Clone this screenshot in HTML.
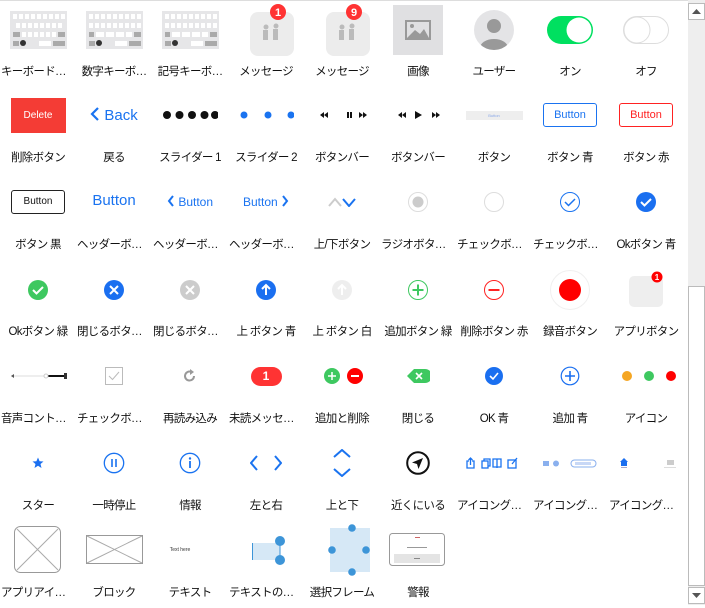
<!DOCTYPE html>
<html><head><meta charset="utf-8">
<style>
*{margin:0;padding:0;box-sizing:border-box}
body{width:705px;height:605px;overflow:hidden;background:#fff;font-family:"Liberation Sans","Noto Sans CJK JP",sans-serif;position:relative}
.top{position:absolute;left:0;top:0;width:688px;height:1px;background:#ddd}
.l{position:absolute;width:76px;text-align:center;font-size:11.5px;letter-spacing:-0.7px;color:#111;white-space:nowrap;overflow:hidden;text-overflow:ellipsis;line-height:14px;padding:0 1px}
.i{position:absolute;display:flex;align-items:center;justify-content:center;width:76px;height:60px}
.sb{position:absolute;left:688px;top:0;width:17px;height:605px;background:#eee}
.thumb{position:absolute;left:688px;top:286px;width:17px;height:300px;background:#fff;border:1px solid #bbb}
.btn{position:absolute;left:688px;width:17px;height:17px;background:#fff;border:1px solid #bbb}
</style></head><body>
<div class="top"></div>

<!-- Row 1 -->
<div class="i" style="left:0;top:0">
<svg width="57" height="38" viewBox="0 0 57 38"><rect width="57" height="38" fill="#e6e6e8"/><g fill="#fff"><rect x="3" y="3" width="4" height="5"/><rect x="9" y="3" width="4" height="5"/><rect x="15" y="3" width="4" height="5"/><rect x="21" y="3" width="4" height="5"/><rect x="27" y="3" width="4" height="5"/><rect x="33" y="3" width="4" height="5"/><rect x="39" y="3" width="4" height="5"/><rect x="45" y="3" width="4" height="5"/><rect x="51" y="3" width="4" height="5"/><rect x="6" y="12" width="4" height="5"/><rect x="12" y="12" width="4" height="5"/><rect x="18" y="12" width="4" height="5"/><rect x="24" y="12" width="4" height="5"/><rect x="30" y="12" width="4" height="5"/><rect x="36" y="12" width="4" height="5"/><rect x="42" y="12" width="4" height="5"/><rect x="48" y="12" width="4" height="5"/><rect x="12" y="21" width="4" height="5"/><rect x="18" y="21" width="4" height="5"/><rect x="24" y="21" width="4" height="5"/><rect x="30" y="21" width="4" height="5"/><rect x="36" y="21" width="4" height="5"/><rect x="42" y="21" width="4" height="5"/><rect x="29" y="30" width="12" height="5"/></g><g fill="#aaa"><rect x="3" y="21" width="7" height="5"/><rect x="48" y="21" width="7" height="5"/><rect x="3" y="30" width="6" height="5"/><rect x="43" y="30" width="12" height="5"/></g><circle cx="13" cy="32" r="3" fill="#333"/></svg></div>
<div class="l" style="left:0;top:65px">キーボードコ…</div>
<div class="i" style="left:76px;top:0">
<svg width="57" height="38" viewBox="0 0 57 38"><rect width="57" height="38" fill="#e6e6e8"/><g fill="#fff"><rect x="3" y="3" width="4" height="5"/><rect x="9" y="3" width="4" height="5"/><rect x="15" y="3" width="4" height="5"/><rect x="21" y="3" width="4" height="5"/><rect x="27" y="3" width="4" height="5"/><rect x="33" y="3" width="4" height="5"/><rect x="39" y="3" width="4" height="5"/><rect x="45" y="3" width="4" height="5"/><rect x="51" y="3" width="4" height="5"/><rect x="3" y="12" width="4" height="5"/><rect x="9" y="12" width="4" height="5"/><rect x="15" y="12" width="4" height="5"/><rect x="21" y="12" width="4" height="5"/><rect x="27" y="12" width="4" height="5"/><rect x="33" y="12" width="4" height="5"/><rect x="39" y="12" width="4" height="5"/><rect x="45" y="12" width="4" height="5"/><rect x="51" y="12" width="4" height="5"/><rect x="10" y="21" width="8" height="5"/><rect x="20" y="21" width="8" height="5"/><rect x="30" y="21" width="8" height="5"/><rect x="40" y="21" width="6" height="5"/><rect x="29" y="30" width="12" height="5"/></g><g fill="#aaa"><rect x="3" y="21" width="5" height="5"/><rect x="48" y="21" width="7" height="5"/><rect x="3" y="30" width="6" height="5"/><rect x="43" y="30" width="12" height="5"/></g><circle cx="13" cy="32" r="3" fill="#333"/></svg></div>
<div class="l" style="left:76px;top:65px">数字キーボ…</div>
<div class="i" style="left:152px;top:0">
<svg width="57" height="38" viewBox="0 0 57 38"><rect width="57" height="38" fill="#e6e6e8"/><g fill="#fff"><rect x="3" y="3" width="4" height="5"/><rect x="9" y="3" width="4" height="5"/><rect x="15" y="3" width="4" height="5"/><rect x="21" y="3" width="4" height="5"/><rect x="27" y="3" width="4" height="5"/><rect x="33" y="3" width="4" height="5"/><rect x="39" y="3" width="4" height="5"/><rect x="45" y="3" width="4" height="5"/><rect x="51" y="3" width="4" height="5"/><rect x="3" y="12" width="4" height="5"/><rect x="9" y="12" width="4" height="5"/><rect x="15" y="12" width="4" height="5"/><rect x="21" y="12" width="4" height="5"/><rect x="27" y="12" width="4" height="5"/><rect x="33" y="12" width="4" height="5"/><rect x="39" y="12" width="4" height="5"/><rect x="45" y="12" width="4" height="5"/><rect x="51" y="12" width="4" height="5"/><rect x="10" y="21" width="8" height="5"/><rect x="20" y="21" width="8" height="5"/><rect x="30" y="21" width="8" height="5"/><rect x="40" y="21" width="6" height="5"/><rect x="29" y="30" width="12" height="5"/></g><g fill="#aaa"><rect x="3" y="21" width="5" height="5"/><rect x="48" y="21" width="7" height="5"/><rect x="3" y="30" width="6" height="5"/><rect x="43" y="30" width="12" height="5"/></g><circle cx="13" cy="32" r="3" fill="#333"/></svg></div>
<div class="l" style="left:152px;top:65px">記号キーボ…</div>
<div class="i" style="left:228px;top:0">
<svg width="60" height="56" viewBox="0 0 60 56"><rect x="14" y="10" width="44" height="44" rx="8" fill="#ececec"/><g fill="#bbb"><circle cx="30" cy="25" r="2.5"/><rect x="27" y="28" width="5" height="10"/><circle cx="40" cy="24" r="2.5"/><rect x="37" y="27" width="5" height="11"/></g><circle cx="42" cy="10" r="8" fill="#f33"/><text x="42" y="14" fill="#fff" font-size="11" font-weight="bold" text-anchor="middle" font-family="Liberation Sans">1</text></svg></div>
<div class="l" style="left:228px;top:65px">メッセージ</div>
<div class="i" style="left:304px;top:0">
<svg width="60" height="56" viewBox="0 0 60 56"><rect x="14" y="10" width="44" height="44" rx="8" fill="#ececec"/><g fill="#bbb"><circle cx="30" cy="25" r="2.5"/><rect x="27" y="28" width="5" height="10"/><circle cx="40" cy="24" r="2.5"/><rect x="37" y="27" width="5" height="11"/></g><circle cx="42" cy="10" r="8" fill="#f33"/><text x="42" y="14" fill="#fff" font-size="11" font-weight="bold" text-anchor="middle" font-family="Liberation Sans">9</text></svg></div>
<div class="l" style="left:304px;top:65px">メッセージ</div>
<div class="i" style="left:380px;top:0">
<svg width="50" height="50" viewBox="0 0 50 50"><rect width="50" height="50" fill="#e0e0e2"/><rect x="13" y="16" width="24" height="18" fill="none" stroke="#999" stroke-width="2"/><circle cx="19" cy="21" r="2" fill="#999"/><path d="M14 33 L22 25 L27 29 L31 24 L36 33Z" fill="#999"/></svg></div>
<div class="l" style="left:380px;top:65px">画像</div>
<div class="i" style="left:456px;top:0">
<svg width="40" height="40" viewBox="0 0 40 40"><defs><clipPath id="cc"><circle cx="20" cy="20" r="20"/></clipPath></defs><circle cx="20" cy="20" r="20" fill="#e4e4e6"/><circle cx="20" cy="16" r="7" fill="#999"/><ellipse cx="20" cy="38" rx="14" ry="9" fill="#999" clip-path="url(#cc)"/></svg></div>
<div class="l" style="left:456px;top:65px">ユーザー</div>
<div class="i" style="left:532px;top:0">
<svg width="46" height="28" viewBox="0 0 46 28"><rect x="0" y="0" width="46" height="28" rx="14" fill="#00e060"/><circle cx="32" cy="14" r="12.5" fill="#fff"/></svg></div>
<div class="l" style="left:532px;top:65px">オン</div>
<div class="i" style="left:608px;top:0">
<svg width="46" height="28" viewBox="0 0 46 28"><rect x="0.5" y="0.5" width="45" height="27" rx="13.5" fill="#fff" stroke="#ddd"/><circle cx="14" cy="14" r="13" fill="#fff" stroke="#ddd"/></svg></div>
<div class="l" style="left:608px;top:65px">オフ</div>

<!-- Row 2 -->
<div class="i" style="left:0;top:85px"><div style="width:55px;height:35px;background:#f43c35;color:#fff;font-size:10px;line-height:35px;text-align:center">Delete</div></div>
<div class="l" style="left:0;top:151px">削除ボタン</div>
<div class="i" style="left:76px;top:85px"><span style="color:#1a73f0;font-size:15px"><svg width="10" height="14" viewBox="0 0 10 14" style="vertical-align:-1px"><path d="M8 1 L2 7 L8 13" fill="none" stroke="#1a73f0" stroke-width="2.2"/></svg> Back</span></div>
<div class="l" style="left:76px;top:151px">戻る</div>
<div class="i" style="left:152px;top:85px"><svg width="56" height="10"><g fill="#111"><circle cx="5" cy="5" r="4"/><circle cx="17.5" cy="5" r="4"/><circle cx="30" cy="5" r="4"/><circle cx="42.5" cy="5" r="4"/><circle cx="53" cy="5" r="4"/></g></svg></div>
<div class="l" style="left:152px;top:151px">スライダー 1</div>
<div class="i" style="left:228px;top:85px"><svg width="56" height="10"><g fill="#1a73f0"><circle cx="6" cy="5" r="3.5"/><circle cx="30" cy="5" r="3.5"/><circle cx="53" cy="5" r="3.5"/></g></svg></div>
<div class="l" style="left:228px;top:151px">スライダー 2</div>
<div class="i" style="left:304px;top:85px"><svg width="56" height="10"><g fill="#111"><path d="M14 2 L10 5 L14 8Z M10 2 L6 5 L10 8Z"/><rect x="33" y="2" width="2" height="6"/><rect x="36" y="2" width="2" height="6"/><path d="M45 2 L49 5 L45 8Z M49 2 L53 5 L49 8Z"/></g></svg></div>
<div class="l" style="left:304px;top:151px">ボタンバー</div>
<div class="i" style="left:380px;top:85px"><svg width="56" height="10"><g fill="#111"><path d="M16 2 L12 5 L16 8Z M12 2 L8 5 L12 8Z"/><path d="M25 1 L32 5 L25 9Z"/><path d="M42 2 L46 5 L42 8Z M46 2 L50 5 L46 8Z"/></g></svg></div>
<div class="l" style="left:380px;top:151px">ボタンバー</div>
<div class="i" style="left:456px;top:85px"><div style="width:57px;height:9px;background:#eee;color:#8aa8e8;font-size:4px;line-height:9px;text-align:center">Button</div></div>
<div class="l" style="left:456px;top:151px">ボタン</div>
<div class="i" style="left:532px;top:85px"><div style="width:54px;height:24px;border:1px solid #1a73f0;border-radius:3px;color:#1a73f0;font-size:11px;line-height:22px;text-align:center">Button</div></div>
<div class="l" style="left:532px;top:151px">ボタン 青</div>
<div class="i" style="left:608px;top:85px"><div style="width:54px;height:24px;border:1px solid #f22;border-radius:3px;color:#f22;font-size:11px;line-height:22px;text-align:center">Button</div></div>
<div class="l" style="left:608px;top:151px">ボタン 赤</div>

<!-- Row 3 -->
<div class="i" style="left:0;top:172px"><div style="width:54px;height:24px;border:1px solid #222;border-radius:3px;color:#111;font-size:10px;line-height:22px;text-align:center">Button</div></div>
<div class="l" style="left:0;top:238px">ボタン 黒</div>
<div class="i" style="left:76px;top:170px"><span style="color:#1a73f0;font-size:15px">Button</span></div>
<div class="l" style="left:76px;top:238px">ヘッダーボタン</div>
<div class="i" style="left:152px;top:172px"><span style="color:#1a73f0;font-size:12px"><svg width="8" height="12" viewBox="0 0 8 12" style="vertical-align:-1px"><path d="M6 1 L2 6 L6 11" fill="none" stroke="#1a73f0" stroke-width="2"/></svg> Button</span></div>
<div class="l" style="left:152px;top:238px">ヘッダーボタ…</div>
<div class="i" style="left:228px;top:172px"><span style="color:#1a73f0;font-size:12px">Button <svg width="8" height="12" viewBox="0 0 8 12" style="vertical-align:-1px"><path d="M2 1 L6 6 L2 11" fill="none" stroke="#1a73f0" stroke-width="2"/></svg></span></div>
<div class="l" style="left:228px;top:238px">ヘッダーボタ…</div>
<div class="i" style="left:304px;top:172px"><svg width="28" height="10"><path d="M1 9 L7 2 L13 9" fill="none" stroke="#ccc" stroke-width="2"/><path d="M15 2 L21 9 L27 2" fill="none" stroke="#1a73f0" stroke-width="2"/></svg></div>
<div class="l" style="left:304px;top:238px">上/下ボタン</div>
<div class="i" style="left:380px;top:172px"><svg width="22" height="22"><circle cx="11" cy="11" r="9.5" fill="#fff" stroke="#ddd"/><circle cx="11" cy="11" r="5.5" fill="#ccc"/></svg></div>
<div class="l" style="left:380px;top:238px">ラジオボタン …</div>
<div class="i" style="left:456px;top:172px"><svg width="22" height="22"><circle cx="11" cy="11" r="9.5" fill="#fff" stroke="#ddd"/></svg></div>
<div class="l" style="left:456px;top:238px">チェックボック…</div>
<div class="i" style="left:532px;top:172px"><svg width="22" height="22"><circle cx="11" cy="11" r="9.5" fill="#fff" stroke="#1a73f0"/><path d="M6 11 L9.5 14.5 L16 8" fill="none" stroke="#1a73f0" stroke-width="1.5"/></svg></div>
<div class="l" style="left:532px;top:238px">チェックボック…</div>
<div class="i" style="left:608px;top:172px"><svg width="22" height="22"><circle cx="11" cy="11" r="10" fill="#1a6ff0"/><path d="M6 11 L9.5 14.5 L16 8" fill="none" stroke="#fff" stroke-width="2"/></svg></div>
<div class="l" style="left:608px;top:238px">Okボタン 青</div>

<!-- Row 4 -->
<div class="i" style="left:0;top:260px"><svg width="22" height="22"><circle cx="11" cy="11" r="10" fill="#3ec860"/><path d="M6 11 L9.5 14.5 L16 8" fill="none" stroke="#fff" stroke-width="2"/></svg></div>
<div class="l" style="left:0;top:325px">Okボタン 緑</div>
<div class="i" style="left:76px;top:260px"><svg width="22" height="22"><circle cx="11" cy="11" r="10" fill="#1a6ff0"/><path d="M7 7 L15 15 M15 7 L7 15" stroke="#fff" stroke-width="2"/></svg></div>
<div class="l" style="left:76px;top:325px">閉じるボタン…</div>
<div class="i" style="left:152px;top:260px"><svg width="22" height="22"><circle cx="11" cy="11" r="10" fill="#ccc"/><path d="M7 7 L15 15 M15 7 L7 15" stroke="#fff" stroke-width="2"/></svg></div>
<div class="l" style="left:152px;top:325px">閉じるボタン…</div>
<div class="i" style="left:228px;top:260px"><svg width="22" height="22"><circle cx="11" cy="11" r="10" fill="#1a6ff0"/><path d="M11 16 L11 6 M7 10 L11 6 L15 10" fill="none" stroke="#fff" stroke-width="2"/></svg></div>
<div class="l" style="left:228px;top:325px">上 ボタン 青</div>
<div class="i" style="left:304px;top:260px"><svg width="22" height="22"><circle cx="11" cy="11" r="10" fill="#eee"/><path d="M11 16 L11 6 M7 10 L11 6 L15 10" fill="none" stroke="#fff" stroke-width="2"/></svg></div>
<div class="l" style="left:304px;top:325px">上 ボタン 白</div>
<div class="i" style="left:380px;top:260px"><svg width="22" height="22"><circle cx="11" cy="11" r="9.5" fill="#fff" stroke="#3ec860"/><path d="M11 5.5 V16.5 M5.5 11 H16.5" stroke="#3ec860" stroke-width="2"/></svg></div>
<div class="l" style="left:380px;top:325px">追加ボタン 緑</div>
<div class="i" style="left:456px;top:260px"><svg width="22" height="22"><circle cx="11" cy="11" r="9.5" fill="#fff" stroke="#f22"/><path d="M5.5 11 H16.5" stroke="#f22" stroke-width="2"/></svg></div>
<div class="l" style="left:456px;top:325px">削除ボタン 赤</div>
<div class="i" style="left:532px;top:260px"><svg width="40" height="40"><circle cx="20" cy="20" r="19.5" fill="#fff" stroke="#f0f0f0"/><circle cx="20" cy="20" r="11" fill="#f00"/></svg></div>
<div class="l" style="left:532px;top:325px">録音ボタン</div>
<div class="i" style="left:608px;top:258px"><svg width="40" height="40"><rect x="3" y="8" width="34" height="31" rx="5" fill="#eee"/><circle cx="31" cy="9" r="5.5" fill="#f00"/><text x="31" y="12" fill="#fff" font-size="8" font-weight="bold" text-anchor="middle" font-family="Liberation Sans">1</text></svg></div>
<div class="l" style="left:608px;top:325px">アプリボタン</div>

<!-- Row 5 -->
<div class="i" style="left:0;top:346px"><svg width="58" height="8"><rect x="2" y="3.5" width="35" height="1" fill="#ddd"/><rect x="38" y="3" width="18" height="2" fill="#111"/><path d="M2 4 L5 2 L5 6Z" fill="#555"/><circle cx="37" cy="4" r="2" fill="#fff" stroke="#ccc"/><rect x="55" y="1" width="3" height="6" fill="#333"/></svg></div>
<div class="l" style="left:0;top:412px">音声コントロ…</div>
<div class="i" style="left:76px;top:346px"><svg width="18" height="18"><rect x="0.5" y="0.5" width="17" height="17" fill="#fff" stroke="#bbb"/><path d="M4 9 L7.5 12.5 L14 5" fill="none" stroke="#bbb" stroke-width="1"/></svg></div>
<div class="l" style="left:76px;top:412px">チェックボックス</div>
<div class="i" style="left:152px;top:346px"><svg width="14" height="14" viewBox="0 0 14 14"><path d="M11 7 A4.5 4.5 0 1 1 8 2.8" fill="none" stroke="#999" stroke-width="2"/><path d="M7 0 L11 3 L7 6Z" fill="#999"/></svg></div>
<div class="l" style="left:152px;top:412px">再読み込み</div>
<div class="i" style="left:228px;top:346px"><div style="width:31px;height:19px;border-radius:10px;background:#f33;color:#fff;font-size:12px;font-weight:bold;line-height:19px;text-align:center">1</div></div>
<div class="l" style="left:228px;top:412px">未読メッセージ</div>
<div class="i" style="left:304px;top:346px"><svg width="56" height="18"><circle cx="18" cy="9" r="8" fill="#3ec860"/><path d="M18 5 V13 M14 9 H22" stroke="#fff" stroke-width="1.5"/><circle cx="41" cy="9" r="8" fill="#f00"/><path d="M37 9 H45" stroke="#fff" stroke-width="2"/></svg></div>
<div class="l" style="left:304px;top:412px">追加と削除</div>
<div class="i" style="left:380px;top:346px"><svg width="24" height="18"><path d="M1 9 L8 2 H19 A7 7 0 0 1 19 16 H8Z" fill="#3ec860"/><path d="M10 6 L16 12 M16 6 L10 12" stroke="#fff" stroke-width="1.6"/></svg></div>
<div class="l" style="left:380px;top:412px">閉じる</div>
<div class="i" style="left:456px;top:346px"><svg width="20" height="20"><circle cx="10" cy="10" r="9" fill="#1a6ff0"/><path d="M6 10 L9 13 L14 7" fill="none" stroke="#fff" stroke-width="1.6"/></svg></div>
<div class="l" style="left:456px;top:412px">OK 青</div>
<div class="i" style="left:532px;top:346px"><svg width="20" height="20"><circle cx="10" cy="10" r="8.8" fill="#fff" stroke="#1a6ff0" stroke-width="1.2"/><path d="M10 5 V15 M5 10 H15" stroke="#1a6ff0" stroke-width="1.6"/></svg></div>
<div class="l" style="left:532px;top:412px">追加 青</div>
<div class="i" style="left:608px;top:346px"><svg width="60" height="12"><circle cx="11" cy="6" r="5" fill="#f5a623"/><circle cx="33" cy="6" r="5" fill="#3ec860"/><circle cx="55" cy="6" r="5" fill="#f00"/></svg></div>
<div class="l" style="left:608px;top:412px">アイコン</div>

<!-- Row 6 -->
<div class="i" style="left:0;top:433px"><svg width="12" height="12" viewBox="0 0 12 12"><path d="M6 0.5 L7.6 4.2 L11.5 4.5 L8.5 7 L9.5 11 L6 8.8 L2.5 11 L3.5 7 L0.5 4.5 L4.4 4.2Z" fill="#1a6ff0"/></svg></div>
<div class="l" style="left:0;top:499px">スター</div>
<div class="i" style="left:76px;top:433px"><svg width="22" height="22"><circle cx="11" cy="11" r="9.7" fill="none" stroke="#1a73f0" stroke-width="1.3"/><path d="M9 7 V15 M13 7 V15" stroke="#1a73f0" stroke-width="1.6"/></svg></div>
<div class="l" style="left:76px;top:499px">一時停止</div>
<div class="i" style="left:152px;top:433px"><svg width="22" height="22"><circle cx="11" cy="11" r="9.7" fill="none" stroke="#1a73f0" stroke-width="1.3"/><circle cx="11" cy="6.5" r="1.2" fill="#1a73f0"/><path d="M11 9 V16" stroke="#1a73f0" stroke-width="1.8"/></svg></div>
<div class="l" style="left:152px;top:499px">情報</div>
<div class="i" style="left:228px;top:433px"><svg width="32" height="16"><path d="M7 1 L1 8 L7 15" fill="none" stroke="#1a73f0" stroke-width="2"/><path d="M25 1 L31 8 L25 15" fill="none" stroke="#1a73f0" stroke-width="2"/></svg></div>
<div class="l" style="left:228px;top:499px">左と右</div>
<div class="i" style="left:304px;top:433px"><svg width="18" height="28"><path d="M1 8 L9 1 L17 8" fill="none" stroke="#1a73f0" stroke-width="2"/><path d="M1 20 L9 27 L17 20" fill="none" stroke="#1a73f0" stroke-width="2"/></svg></div>
<div class="l" style="left:304px;top:499px">上と下</div>
<div class="i" style="left:380px;top:433px"><svg width="24" height="24"><circle cx="12" cy="12" r="10.8" fill="none" stroke="#111" stroke-width="2"/><path d="M17 7 L6 11.5 L11 13 L12.5 18Z" fill="#111"/></svg></div>
<div class="l" style="left:380px;top:499px">近くにいる</div>
<div class="i" style="left:456px;top:433px"><svg width="60" height="12"><g fill="none" stroke="#1a73f0" stroke-width="1.3"><path d="M5 4 H3 V11 H10 V4 H8 M6.5 8 V1 M4.5 3 L6.5 1 L8.5 3"/><rect x="18" y="4" width="6" height="7"/><path d="M20 4 V2 H26 V9 H24"/><path d="M33 2 V11 M33 2 H29 V10 H33 M33 2 H37 V10 H33"/><rect x="44" y="3" width="8" height="8"/><path d="M48 7 L53 1"/></g></svg></div>
<div class="l" style="left:456px;top:499px">アイコングル…</div>
<div class="i" style="left:532px;top:433px"><svg width="60" height="10"><g fill="#8ab0ee"><rect x="3" y="3" width="6" height="5"/><circle cx="16" cy="5.5" r="3"/><path d="M22 8 L25 2"/></g><rect x="31" y="2" width="25" height="7" rx="3.5" fill="none" stroke="#8ab0ee" stroke-width="1"/><rect x="35" y="4" width="16" height="3" fill="#c8d8f6"/></svg></div>
<div class="l" style="left:532px;top:499px">アイコングル…</div>
<div class="i" style="left:608px;top:433px"><svg width="60" height="12"><path d="M8 1 L4 5 H5 V9 H11 V5 H12Z" fill="#1a6ff0"/><rect x="5" y="10" width="6" height="1" fill="#aac"/><rect x="51" y="3" width="7" height="5" fill="#ccc"/><rect x="48" y="10" width="12" height="1" fill="#ddd"/></svg></div>
<div class="l" style="left:608px;top:499px">アイコングル…</div>

<!-- Row 7 -->
<div class="i" style="left:0;top:520px"><svg width="48" height="48"><rect x="0.5" y="0.5" width="46" height="46" rx="6" fill="#fff" stroke="#999"/><path d="M3 3 L44 44 M44 3 L3 44" stroke="#aaa" stroke-width="1"/></svg></div>
<div class="l" style="left:0;top:586px">アプリアイコン</div>
<div class="i" style="left:76px;top:520px"><svg width="57" height="30"><rect x="0.5" y="0.5" width="56" height="28" fill="#fff" stroke="#999"/><path d="M1 1 L56 28 M56 1 L1 28" stroke="#aaa"/></svg></div>
<div class="l" style="left:76px;top:586px">ブロック</div>
<div class="i" style="left:152px;top:520px"><span style="font-size:5px;color:#333;margin-left:-20px">Text here</span></div>
<div class="l" style="left:152px;top:586px">テキスト</div>
<div class="i" style="left:228px;top:520px"><svg width="40" height="40"><rect x="6" y="13" width="28" height="17" fill="#d6e8f6"/><rect x="6" y="13" width="1" height="17" fill="#3d95d8"/><path d="M34 11 V30" stroke="#3d95d8" stroke-width="1"/><circle cx="34" cy="11" r="5" fill="#3d95d8"/><circle cx="34" cy="30" r="5" fill="#3d95d8"/></svg></div>
<div class="l" style="left:228px;top:586px">テキストの選…</div>
<div class="i" style="left:304px;top:520px"><svg width="56" height="52"><rect x="16" y="4" width="40" height="44" fill="#d6e8f6"/><circle cx="38" cy="4" r="3.8" fill="#3d95d8"/><circle cx="38" cy="48" r="3.8" fill="#3d95d8"/><circle cx="18" cy="26" r="3.8" fill="#3d95d8"/><circle cx="52" cy="26" r="3.8" fill="#3d95d8"/></svg></div>
<div class="l" style="left:304px;top:586px">選択フレーム</div>
<div class="i" style="left:380px;top:520px"><svg width="58" height="34"><rect x="0.5" y="0.5" width="55" height="32" rx="3" fill="#fff" stroke="#999"/><rect x="26" y="4" width="5" height="1" fill="#c66"/><rect x="18" y="14" width="20" height="1" fill="#999"/><rect x="5" y="21" width="46" height="9" fill="#e4e4e4"/><rect x="25" y="25" width="6" height="1" fill="#888"/></svg></div>
<div class="l" style="left:380px;top:586px">警報</div>

<!-- scrollbar -->
<div class="sb"></div>
<div class="thumb"></div>
<div class="btn" style="top:3px"><svg width="15" height="15"><path d="M3 10 L7.5 5 L12 10Z" fill="#555"/></svg></div>
<div class="btn" style="top:587px"><svg width="15" height="15"><path d="M3 5 L7.5 10 L12 5Z" fill="#555"/></svg></div>
</body></html>
